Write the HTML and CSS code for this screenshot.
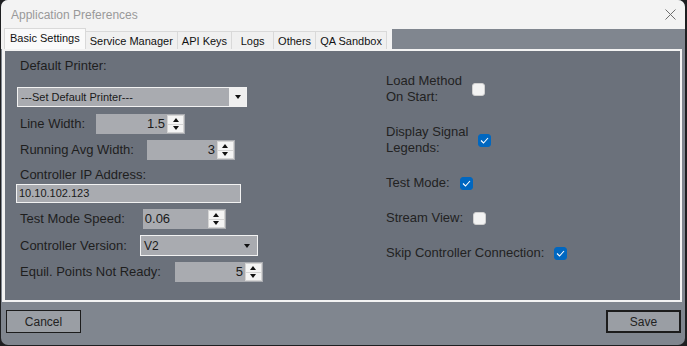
FILE: index.html
```html
<!DOCTYPE html>
<html>
<head>
    <title>Application Preferences</title>
    <link rel="stylesheet" href="styles.css">
</head>
<body>
<div class="window">
    <div class="titlebar">
        <span class="title">Application Preferences</span>
        <svg class="close" width="11" height="11" viewBox="0 0 11 11"><path d="M0.5 0.5 L10.5 10.5 M10.5 0.5 L0.5 10.5" stroke="#6e6e6e" stroke-width="1"/></svg>
    </div>

    <div class="tabrow">
        <div class="tabs">
            <div class="tab active">Basic Settings</div>
            <div class="tab">Service Manager</div>
            <div class="tab">API Keys</div>
            <div class="tab">Logs</div>
            <div class="tab">Others</div>
            <div class="tab">QA Sandbox</div>
        </div>
    </div>

    <div class="panel">
        <div class="col-left">
            <div class="field-label first">Default Printer:</div>
            <div class="select printer">
                <span class="select-text">---Set Default Printer---</span>
                <span class="select-btn"><i class="caret"></i></span>
            </div>

            <div class="row row-line">
                <label>Line Width:</label>
                <div class="spin spin-line">
                    <span class="spin-val">1.5</span>
                    <span class="spin-btns"><i class="up"></i><i class="down"></i></span>
                </div>
            </div>

            <div class="row row-avg">
                <label>Running Avg Width:</label>
                <div class="spin spin-avg">
                    <span class="spin-val">3</span>
                    <span class="spin-btns"><i class="up"></i><i class="down"></i></span>
                </div>
            </div>

            <div class="field-label ip-label">Controller IP Address:</div>
            <div class="textbox ip">10.10.102.123</div>

            <div class="row row-speed">
                <label>Test Mode Speed:</label>
                <div class="spin spin-speed">
                    <span class="spin-val left">0.06</span>
                    <span class="spin-btns"><i class="up"></i><i class="down"></i></span>
                </div>
            </div>

            <div class="row row-version">
                <label>Controller Version:</label>
                <div class="select version">
                    <span class="select-text">V2</span>
                    <span class="select-btn plain"><i class="caret"></i></span>
                </div>
            </div>

            <div class="row row-equil">
                <label>Equil. Points Not Ready:</label>
                <div class="spin spin-equil">
                    <span class="spin-val">5</span>
                    <span class="spin-btns"><i class="up"></i><i class="down"></i></span>
                </div>
            </div>
        </div>

        <div class="col-right">
            <div class="check-item">
                <span class="check-label">Load Method<br>On Start:</span>
                <span class="checkbox"></span>
            </div>
            <div class="check-item">
                <span class="check-label">Display Signal<br>Legends:</span>
                <span class="checkbox checked"><svg width="9" height="7" viewBox="0 0 9 7"><path d="M1 3.5 L3.5 6 L8 1" fill="none" stroke="#fff" stroke-width="1.1"/></svg></span>
            </div>
            <div class="check-item">
                <span class="check-label">Test Mode:</span>
                <span class="checkbox checked"><svg width="9" height="7" viewBox="0 0 9 7"><path d="M1 3.5 L3.5 6 L8 1" fill="none" stroke="#fff" stroke-width="1.1"/></svg></span>
            </div>
            <div class="check-item">
                <span class="check-label">Stream View:</span>
                <span class="checkbox"></span>
            </div>
            <div class="check-item">
                <span class="check-label">Skip Controller Connection:</span>
                <span class="checkbox checked"><svg width="9" height="7" viewBox="0 0 9 7"><path d="M1 3.5 L3.5 6 L8 1" fill="none" stroke="#fff" stroke-width="1.1"/></svg></span>
            </div>
        </div>
    </div>

    <div class="footer">
        <button class="btn">Cancel</button>
        <button class="btn default">Save</button>
    </div>
</div>
</body>
</html>
```

FILE: styles.css
```css
body {
    margin: 0;
    background-color: #1e1f21;
    font-family: "Liberation Sans", Arial, sans-serif;
    color: #1e1e1e;
}
.window {
    width: 684px;
    height: 345px;
    margin-left: 1px;
    background-color: #80868f;
    border-radius: 7px;
    overflow: hidden;
    display: flex;
    flex-direction: column;
}
.titlebar {
    height: 29px;
    flex-shrink: 0;
    background-color: #f3f3f3;
    display: flex;
    align-items: center;
    justify-content: space-between;
    padding: 0 9px 0 10px;
    box-sizing: border-box;
}
.title {
    font-size: 12px;
    color: #999;
    padding-top: 1px;
}
.close {
    display: block;
}

/* tabs */
.tabrow {
    height: 20px;
    flex-shrink: 0;
    display: flex;
}
.tabs {
    display: flex;
    align-items: flex-end;
    background-color: #f3f3f3;
    padding: 0 5px 0 3px;
}
.tab {
    height: 18px;
    min-width: 42px;
    padding: 0 4px;
    box-sizing: border-box;
    border: 1px solid #d9d9d9;
    border-bottom: none;
    border-left: none;
    background-color: #f0f0f0;
    font-size: 11px;
    line-height: 19px;
    text-align: center;
    color: #111;
    white-space: nowrap;
}
.tab.active {
    height: 21px;
    border-left: 1px solid #d9d9d9;
    background-color: #fafafa;
    line-height: 18px;
    padding: 0 5px;
}

/* content panel */
.panel {
    height: 253px;
    flex-shrink: 0;
    box-sizing: border-box;
    margin: 0 3px 0 1px;
    border: 2px solid #f3f3f3;
    border-left-width: 3px;
    background-color: #6b717b;
    display: flex;
}
.col-left {
    width: 369px;
    padding: 7px 0 0 12px;
    display: flex;
    flex-direction: column;
    align-items: flex-start;
}
.field-label {
    font-size: 13px;
    line-height: 16px;
    margin-left: 3px;
}
.ip-label {
    margin-top: 7px;
}
.row {
    display: flex;
    align-items: center;
    gap: 11px;
    margin-top: 6px;
    padding-left: 3px;
}
.row label {
    font-size: 13px;
    line-height: 16px;
}
.row-line {
    margin-top: 7px;
}
.row-avg {
    gap: 13px;
}
.row-speed {
    gap: 18px;
}
.row-version {
    gap: 13px;
}
.row-equil {
    gap: 14px;
}

.select {
    display: flex;
    box-sizing: border-box;
    border: 1px solid #f2f2f2;
    background-color: #a9abb0;
}
.select.printer {
    width: 230px;
    height: 20px;
    margin-top: 13px;
}
.select.version {
    width: 118px;
    height: 21px;
}
.select-text {
    flex: 1;
    font-size: 11px;
    line-height: 18px;
    padding-left: 3px;
    color: #1a1a1a;
}
.version .select-text {
    font-size: 12px;
    line-height: 20px;
}
.select-btn {
    width: 17px;
    background-color: #efefef;
    display: flex;
    align-items: center;
    justify-content: center;
}
.select-btn.plain {
    background-color: transparent;
    width: 20px;
}
.caret {
    width: 0;
    height: 0;
    border-left: 3px solid transparent;
    border-right: 3px solid transparent;
    border-top: 4px solid #111;
}

.textbox.ip {
    width: 225px;
    height: 19px;
    box-sizing: border-box;
    margin: 1px 0 0 -1px;
    border: 1px solid #f2f2f2;
    background-color: #a9abb0;
    font-size: 11px;
    line-height: 17px;
    padding-left: 2px;
    color: #1a1a1a;
}

.spin {
    display: flex;
    height: 20px;
    box-sizing: border-box;
    background-color: #a9abb0;
}
.spin-line { width: 89px; }
.spin-avg { width: 88px; }
.spin-speed { width: 83px; }
.spin-equil { width: 88px; }
.spin-val {
    flex: 1;
    text-align: right;
    font-size: 13px;
    line-height: 20px;
    padding-right: 2px;
    color: #1a1a1a;
}
.spin-val.left {
    text-align: left;
    padding-left: 2px;
}
.spin-btns {
    width: 15px;
    margin: 1px 1px 1px 0;
    border: 1px solid #d4d4d4;
    background-color: #f4f4f4;
    display: flex;
    flex-direction: column;
}
.spin-btns i {
    flex: 1;
    display: flex;
    align-items: center;
    justify-content: center;
}
.spin-btns .up {
    border-bottom: 1px solid #d4d4d4;
}
.spin-btns .up::after {
    content: "";
    border-left: 3px solid transparent;
    border-right: 3px solid transparent;
    border-bottom: 4px solid #111;
}
.spin-btns .down::after {
    content: "";
    border-left: 3px solid transparent;
    border-right: 3px solid transparent;
    border-top: 4px solid #111;
}

/* right column */
.col-right {
    padding: 22px 0 0 0;
    display: flex;
    flex-direction: column;
    gap: 19px;
}
.check-item {
    display: flex;
    align-items: center;
    gap: 10px;
}
.check-label {
    font-size: 13px;
    line-height: 16px;
    color: #222;
}
.checkbox {
    width: 13px;
    height: 13px;
    box-sizing: border-box;
    border-radius: 3px;
    background-color: #f3f3f3;
    border: 1px solid #d0d0d0;
    display: flex;
    align-items: center;
    justify-content: center;
}
.checkbox.checked {
    background-color: #0067c0;
    border-color: #0067c0;
}

/* bottom buttons */
.footer {
    display: flex;
    justify-content: space-between;
    padding: 8px 4px 0 5px;
}
.btn {
    width: 75px;
    height: 23px;
    box-sizing: border-box;
    background-color: #9a9ea4;
    border: 1px solid #1c1c1c;
    border-radius: 0;
    font-family: "Liberation Sans", Arial, sans-serif;
    font-size: 12px;
    color: #222;
    padding: 0;
}
.btn.default {
    border-width: 2px;
}
```
